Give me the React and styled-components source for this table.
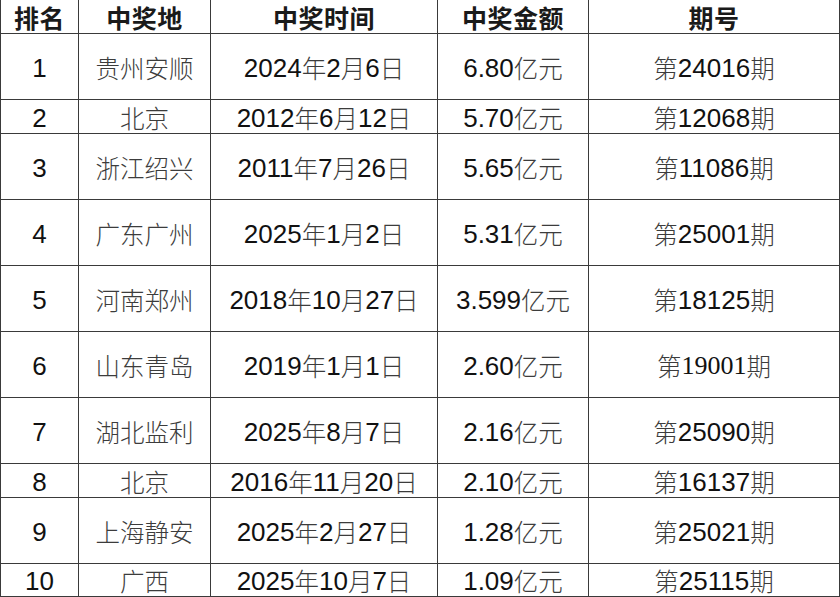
import React from "react";
import styled, { createGlobalStyle } from "styled-components";

const Global = createGlobalStyle`
  html, body { margin: 0; padding: 0; background: #ffffff; }
  body { font-family: "Liberation Sans", "Noto Sans CJK SC", sans-serif; }
`;

const Table = styled.div`
  display: grid;
  grid-template-columns: 79px 132px 227px 151px 251px;
  width: 840px;
`;

const heights = { head: 34, tall: 66, short: 34, end: 33 };

const Cell = styled.div`
  box-sizing: border-box;
  height: ${(p) => heights[p.$size]}px;
  border-right: 1px solid #3a3a3a;
  border-bottom: 1px solid #3a3a3a;
  border-left: ${(p) => (p.$first ? "1px solid #3a3a3a" : "none")};
  display: flex;
  align-items: center;
  justify-content: center;
  white-space: nowrap;
  color: #111;
  font-family: ${(p) =>
    p.$serif
      ? '"Liberation Serif", "Noto Sans CJK SC", serif'
      : '"Liberation Sans", "Noto Sans CJK SC", sans-serif'};
  font-size: ${(p) => (p.$size === "head" ? 25 : 26)}px;
  font-weight: ${(p) => (p.$size === "head" ? 700 : 400)};
  padding-top: ${(p) => (p.$size === "head" ? 1 : p.$size === "end" ? 2 : 3)}px;
  line-height: 1.1;
`;

const HeadText = styled.span`
  display: inline-block;
  line-height: 1.15;
  font-family: "Noto Sans CJK SC", sans-serif;
  font-weight: 700;
  color: #1a1a1a;
  letter-spacing: 0.5px;
`;

const Han = styled.span`
  display: inline-block;
  line-height: 1.1;
  font-family: "Noto Sans CJK SC", sans-serif;
  font-weight: 300;
  color: #3c3c3c;
  font-size: 24.5px;
`;

function Mixed({ text }) {
  const parts = text.match(/[\u4e00-\u9fff]+|[^\u4e00-\u9fff]+/g) || [];
  return parts.map((p, i) =>
    /[\u4e00-\u9fff]/.test(p) ? <Han key={i}>{p}</Han> : <span key={i}>{p}</span>
  );
}

const headers = ["排名", "中奖地", "中奖时间", "中奖金额", "期号"];

const rows = [
  { rank: "1", place: "贵州安顺", date: "2024年2月6日", amount: "6.80亿元", issue: "第24016期", size: "tall" },
  { rank: "2", place: "北京", date: "2012年6月12日", amount: "5.70亿元", issue: "第12068期", size: "short" },
  { rank: "3", place: "浙江绍兴", date: "2011年7月26日", amount: "5.65亿元", issue: "第11086期", size: "tall" },
  { rank: "4", place: "广东广州", date: "2025年1月2日", amount: "5.31亿元", issue: "第25001期", size: "tall" },
  { rank: "5", place: "河南郑州", date: "2018年10月27日", amount: "3.599亿元", issue: "第18125期", size: "tall" },
  { rank: "6", place: "山东青岛", date: "2019年1月1日", amount: "2.60亿元", issue: "第19001期", size: "tall", serifIssue: true },
  { rank: "7", place: "湖北监利", date: "2025年8月7日", amount: "2.16亿元", issue: "第25090期", size: "tall" },
  { rank: "8", place: "北京", date: "2016年11月20日", amount: "2.10亿元", issue: "第16137期", size: "short" },
  { rank: "9", place: "上海静安", date: "2025年2月27日", amount: "1.28亿元", issue: "第25021期", size: "tall" },
  { rank: "10", place: "广西", date: "2025年10月7日", amount: "1.09亿元", issue: "第25115期", size: "end" },
];

export default function App() {
  return (
    <>
      <Global />
      <Table>
        {headers.map((h, i) => (
          <Cell key={h} $size="head" $first={i === 0}>
            <HeadText>{h}</HeadText>
          </Cell>
        ))}
        {rows.map((r) => (
          <React.Fragment key={r.rank}>
            <Cell $first $size={r.size}>{r.rank}</Cell>
            <Cell $size={r.size}><Mixed text={r.place} /></Cell>
            <Cell $size={r.size}><Mixed text={r.date} /></Cell>
            <Cell $size={r.size}><Mixed text={r.amount} /></Cell>
            <Cell $size={r.size} $serif={r.serifIssue}><Mixed text={r.issue} /></Cell>
          </React.Fragment>
        ))}
      </Table>
    </>
  );
}
